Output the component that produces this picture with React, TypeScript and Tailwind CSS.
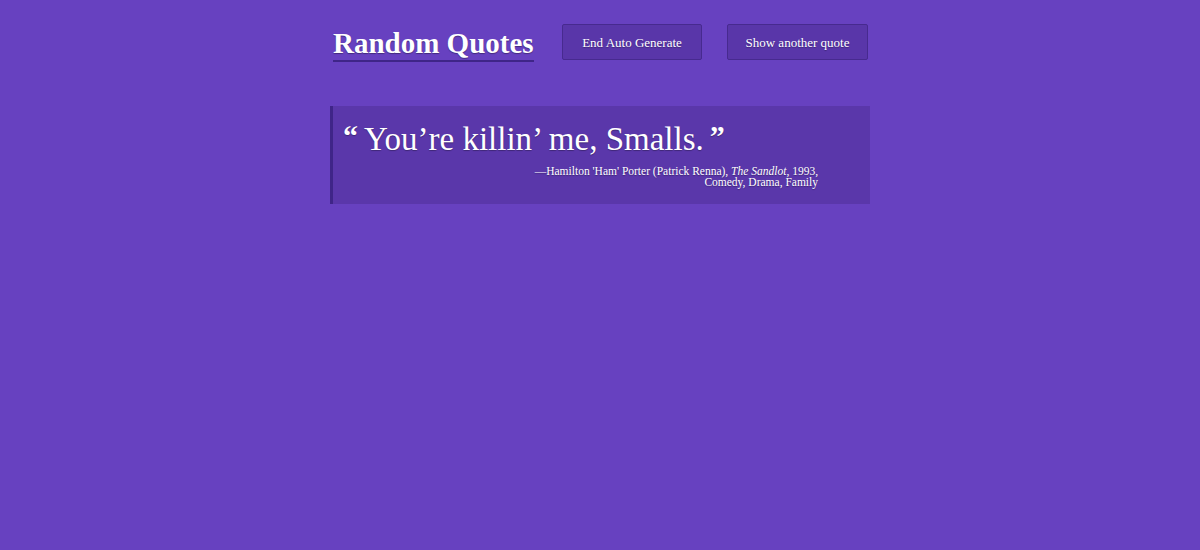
export default function App() {
  return (
    <div
      className="min-h-[550px] w-full bg-[#6741c0] text-white"
      style={{ fontFamily: '"Liberation Serif", "DejaVu Serif", serif' }}
    >
      <div className="mx-auto w-[540px] pt-[24px]">
        <header className="flex items-start">
          <h1 className="mt-[3px] ml-[3px] w-[201px] flex-none whitespace-nowrap border-b-2 border-[#3f2588] pb-[1px] text-[29px] font-bold leading-[32px] [text-shadow:0_1px_1px_rgba(0,0,0,0.35)]">
            Random Quotes
          </h1>
          <button className="ml-[28px] h-[36px] w-[140px] flex-none rounded-[2px] border border-[#472a8f] bg-[#5936a9] pt-[2px] text-[13px] [text-shadow:0_1px_1px_rgba(0,0,0,0.3)]">
            End Auto Generate
          </button>
          <button className="ml-[25px] h-[36px] w-[141px] flex-none rounded-[2px] border border-[#472a8f] bg-[#5936a9] pt-[2px] text-[13px] [text-shadow:0_1px_1px_rgba(0,0,0,0.3)]">
            Show another quote
          </button>
        </header>

        <blockquote className="mt-[44px] h-[98px] border-l-[3px] border-[#3f2588] bg-[#5a37aa] pl-[10px] pr-[52px] pt-[14px]">
          <p className="flex items-start text-[33px] leading-[38px] [text-shadow:0_1px_1px_rgba(0,0,0,0.3)]">
            <span className="mr-[6px] text-[30px] font-bold leading-[32px]">“</span>
            <span>You’re killin’ me, Smalls.</span>
            <span className="ml-[6px] text-[30px] font-bold leading-[32px]">”</span>
          </p>
          <p className="mt-[8px] text-right text-[11.5px] leading-[11px] [text-shadow:0_1px_1px_rgba(0,0,0,0.3)]">
            —Hamilton 'Ham' Porter (Patrick Renna), <i>The Sandlot</i>, 1993,
            <br />
            Comedy, Drama, Family
          </p>
        </blockquote>
      </div>
    </div>
  );
}
